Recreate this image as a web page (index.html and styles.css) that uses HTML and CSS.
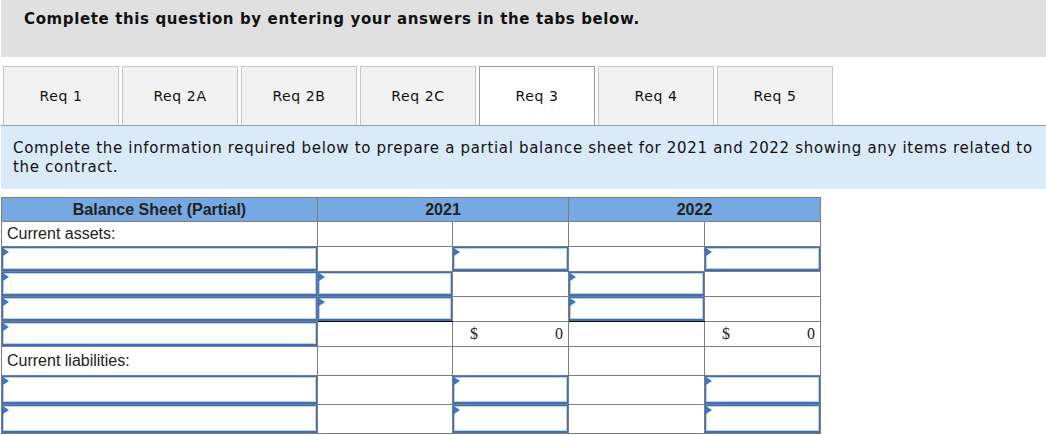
FILE: index.html
```html
<!DOCTYPE html>
<html>
<head>
<meta charset="utf-8">
<link rel="stylesheet" href="styles.css">
</head>
<body>
<div class="page">
  <div class="banner">Complete this question by entering your answers in the tabs below.</div>
  <div class="tabs">
    <div class="tab">Req 1</div>
    <div class="tab">Req 2A</div>
    <div class="tab">Req 2B</div>
    <div class="tab">Req 2C</div>
    <div class="tab active">Req 3</div>
    <div class="tab">Req 4</div>
    <div class="tab">Req 5</div>
  </div>
  <div class="info">Complete the information required below to prepare a partial balance sheet for 2021 and 2022 showing any items related to the contract.</div>
  <table class="bs">
    <colgroup>
      <col class="c1"><col class="c2"><col class="c3"><col class="c4"><col class="c5">
    </colgroup>
    <thead>
      <tr class="head">
        <th>Balance Sheet (Partial)</th>
        <th colspan="2">2021</th>
        <th colspan="2">2022</th>
      </tr>
    </thead>
    <tbody>
      <tr class="r">
        <td class="label">Current assets:</td><td></td><td></td><td></td><td></td>
      </tr>
      <tr class="r">
        <td class="in"><div class="inp"></div></td>
        <td></td>
        <td class="in"><div class="inp"></div></td>
        <td></td>
        <td class="in"><div class="inp"></div></td>
      </tr>
      <tr class="r">
        <td class="in"><div class="inp"></div></td>
        <td class="in"><div class="inp"></div></td>
        <td></td>
        <td class="in"><div class="inp"></div></td>
        <td></td>
      </tr>
      <tr class="r">
        <td class="in"><div class="inp"></div></td>
        <td class="in sum"><div class="inp"></div></td>
        <td></td>
        <td class="in sum"><div class="inp"></div></td>
        <td></td>
      </tr>
      <tr class="r">
        <td class="in"><div class="inp"></div></td>
        <td></td>
        <td class="amt"><span class="cur">$</span><span class="num">0</span></td>
        <td></td>
        <td class="amt"><span class="cur">$</span><span class="num">0</span></td>
      </tr>
      <tr class="rl">
        <td class="label">Current liabilities:</td><td></td><td></td><td></td><td></td>
      </tr>
      <tr class="rl">
        <td class="in"><div class="inp"></div></td>
        <td></td>
        <td class="in"><div class="inp"></div></td>
        <td></td>
        <td class="in"><div class="inp"></div></td>
      </tr>
      <tr class="rl">
        <td class="in"><div class="inp"></div></td>
        <td></td>
        <td class="in"><div class="inp"></div></td>
        <td></td>
        <td class="in"><div class="inp"></div></td>
      </tr>
    </tbody>
  </table>
</div>
</body>
</html>
```
FILE: styles.css
```css
html, body {
  margin: 0;
  padding: 0;
  background: #fff;
}
.page {
  padding-left: 1px;
  font-family: "DejaVu Sans", Verdana, sans-serif;
  color: #111;
}
.banner {
  height: 57px;
  box-sizing: border-box;
  background: #e0e0e0;
  padding: 10px 0 0 23px;
  font-size: 15px;
  font-weight: bold;
  letter-spacing: 0.62px;
  line-height: 18px;
  color: #111;
}
.tabs {
  display: flex;
  gap: 3px;
  margin-top: 9px;
  padding-left: 2px;
  border-bottom: 1px solid #9a9a9a;
}
.tab {
  width: 116px;
  height: 59px;
  box-sizing: border-box;
  border: 1px solid #c6c6c6;
  border-bottom: none;
  background: #f2f2f2;
  display: flex;
  align-items: center;
  justify-content: center;
  font-size: 14px;
  letter-spacing: 0.6px;
  color: #111;
}
.tab.active {
  background: #fff;
  border-color: #9a9a9a;
}
.info {
  background: #daeaf8;
  padding: 13px 12px 12px 12px;
  font-size: 15px;
  letter-spacing: 0.68px;
  line-height: 19px;
  color: #111;
}
.bs {
  margin-top: 8px;
  border-collapse: collapse;
  table-layout: fixed;
  width: 820px;
  font-family: "Liberation Sans", Arial, sans-serif;
  font-size: 16px;
}
.c1 { width: 316px; }
.c2 { width: 135px; }
.c3 { width: 116px; }
.c4 { width: 136px; }
.c5 { width: 116px; }
.bs th, .bs td {
  border: 1px solid #7d7d7d;
  padding: 0;
}
.bs th {
  background: #76a9e1;
  height: 23px;
  font-weight: bold;
  color: #222;
  text-align: center;
}
.r td { height: 24px; }
.rl td { height: 28px; }
.label {
  padding-left: 5px !important;
  color: #222;
}
.bs td.sum { border-bottom: 1px solid #000; }
.inp {
  position: relative;
  box-sizing: border-box;
  border: 1px solid #3d71b7;
  border-bottom-width: 2px;
  box-shadow: inset 0 0 0 1px #bcd1ec;
  background: #fff;
}
.r .inp { height: 24px; }
.rl .inp { height: 28px; }
.inp::before {
  content: "";
  position: absolute;
  left: 0;
  top: 0;
  width: 0;
  height: 0;
  border-left: 6px solid #3d76c2;
  border-top: 4px solid transparent;
  border-bottom: 4px solid transparent;
}
.amt {
  font-family: "Liberation Serif", "Times New Roman", serif;
  font-size: 16px;
  color: #222;
}
.amt .cur {
  float: left;
  margin-left: 17px;
}
.amt .num {
  float: right;
  margin-right: 5px;
}
```
